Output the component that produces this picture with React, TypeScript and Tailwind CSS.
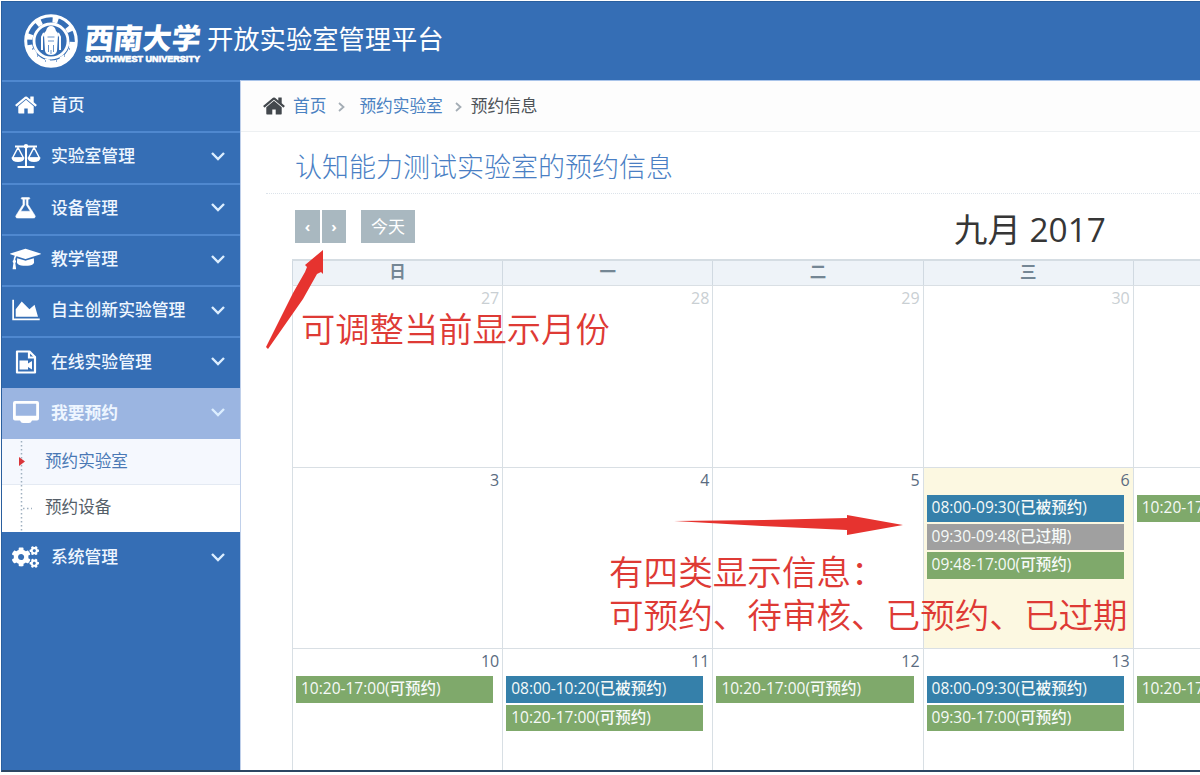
import type { ReactNode } from "react";
import { FaCogs } from "react-icons/fa";

const CN = "font-['Open_Sans','Noto_Sans_CJK_SC',sans-serif]";

function HomeIcon({ className }: { className: string }) {
  return (
    <svg viewBox="0 0 1792 1792" className={className} fill="currentColor">
      <path d="M1472 992v480q0 26-19 45t-45 19h-384v-384h-256v384h-384q-26 0-45-19t-19-45v-480q0-1 .5-3t.5-3l575-474 575 474q1 2 1 6zm223-69l-62 74q-8 9-21 11h-3q-13 0-21-7l-692-577-692 577q-12 8-24 7-13-2-21-11l-62-74q-8-10-7-23.5t11-21.5l719-599q32-26 76-26t76 26l244 204v-195q0-14 9-23t23-9h192q14 0 23 9t9 23v408l219 182q10 8 11 21.5t-7 23.5z" />
    </svg>
  );
}

function ScaleIcon() {
  return (
    <svg viewBox="0 0 30 26" className="h-[26px] w-[30px]" fill="none" stroke="currentColor">
      <path d="M4 3.500h22M15 3v20M6.500 24h17" strokeWidth="2" />
      <circle cx="15" cy="3.200" r="2.200" fill="currentColor" stroke="none" />
      <path d="M7 4.500L1.500 15h11zM23 4.500L17.500 15h11z" strokeWidth="1.500" strokeLinejoin="round" />
      <path d="M.5 14.500h13q-.5 4.500-6.500 4.500t-6.500-4.500zM16.500 14.500h13q-.5 4.500-6.500 4.500t-6.500-4.500z" fill="currentColor" stroke="none" />
    </svg>
  );
}

function FlaskIcon() {
  return (
    <svg viewBox="0 0 1792 1792" className="h-6 w-[25px]" fill="currentColor" stroke="currentColor" strokeWidth="40">
      <path d="M1527 1372q56 89 21.5 152.5t-140.5 63.5h-1152q-106 0-140.5-63.5t21.5-152.5l503-793v-399h-64q-26 0-45-19t-19-45 19-45 45-19h512q26 0 45 19t19 45-19 45-45 19h-64v399zm-779-725l-272 429h712l-272-429-20-31v-436h-128v436z" transform="translate(64 60)" />
    </svg>
  );
}

function CapIcon() {
  return (
    <svg viewBox="0 0 2304 1792" className="h-6 w-[31px] shrink-0" fill="currentColor">
      <path d="M1774 836l18 316q4 69-82 128t-235 93.5-323 34.5-323-34.5-235-93.5-82-128l18-316 574 181q22 7 48 7t48-7zm530-324q0 23-22 31l-1120 352q-4 1-10 1t-10-1l-652-206q-43 34-71 111.5t-34 178.5q63 36 63 109 0 69-58 107l58 433q2 14-8 25-9 11-24 11h-192q-15 0-24-11-10-11-8-25l58-433q-58-38-58-107 0-73 65-111 11-207 98-330l-333-104q-22-8-22-31t22-31l1120-352q4-1 10-1t10 1l1120 352q22 8 22 31z" />
    </svg>
  );
}

function AreaIcon() {
  return (
    <svg viewBox="0 0 2048 1792" className="h-6 w-[28px] shrink-0" fill="currentColor">
      <path d="M2048 1536v128h-2048v-1536h128v1408h1920zm-384-1024l256 896h-1664v-576l448-576 576 576z" />
    </svg>
  );
}

function VideoIcon() {
  return (
    <svg viewBox="0 0 22 24" className="h-6 w-[22px]" fill="none" stroke="currentColor" strokeWidth="2.2">
      <path d="M2 1.500h12.500l5.500 5.500v15.500h-18z" strokeLinejoin="round" />
      <path d="M14 1.500v6h6" />
      <path d="M4.500 10.500h8.500v3l4-2.500v8.500l-4-2.500v2.500h-8.500z" fill="currentColor" stroke="none" />
    </svg>
  );
}

function ScreenIcon() {
  return (
    <svg viewBox="0 0 26 23" className="h-[23px] w-[26px]" fill="currentColor">
      <path fillRule="evenodd" d="M2 0h22q2 0 2 2v15.500q0 2-2 2h-5q-1 2.500-3 2.500h-6q-2 0-3-2.500h-5q-2 0-2-2v-15.500q0-2 2-2zM2.800 2.800v12h20.400v-12z" />
    </svg>
  );
}

function Chevron() {
  return (
    <svg viewBox="0 0 14 9" className="mr-[15px] h-[9px] w-[14px]" fill="none" stroke="#dceeff" strokeWidth="2.4">
      <path d="M1 1l6 6 6-6" />
    </svg>
  );
}

function Crumb({ className }: { className: string }) {
  return (
    <svg viewBox="0 0 7 10" className={`mt-[3px] h-[10px] w-[7px] ${className}`} fill="none" stroke="#a4adb5" strokeWidth="1.8">
      <path d="M1 1l4.500 4-4.500 4" />
    </svg>
  );
}

function Crest() {
  return (
    <svg viewBox="0 0 54 54" className="size-[54px] shrink-0" fill="none" stroke="#fff">
      <circle cx="27" cy="27" r="25.300" strokeWidth="3" />
      <path d="M5 31a22.300 22.300 0 0 0 44 0" strokeWidth="6.500" />
      <circle cx="27" cy="27" r="21.500" strokeWidth="6" strokeDasharray="5.500 11.390" strokeDashoffset="-1" />
      <circle cx="27" cy="27" r="17" strokeWidth="2.800" />
      <path d="M18 36v-13l2-4M36 36v-13l-2-4" strokeWidth="2" />
      <path d="M20 21q0-3 2-4 1-5 5-5t5 5q2 1 2 4l-1 16q-1 4-6 4t-6-4z" fill="#fff" stroke="none" />
      <path d="M23.500 23h7M24 27h6M24.500 31v7M27 36v4M29.500 31v7" stroke="#6793cb" strokeWidth="1" />
      <path d="M8 35h1M13 42h1M21 47h1M32 47h1M40 42h1M45 35h1" stroke="#6793cb" strokeWidth="1.500" />
    </svg>
  );
}

function MenuRow({ icon, label, arrow = true, active = false, last = false }: { icon: ReactNode; label: string; arrow?: boolean; active?: boolean; last?: boolean }) {
  return (
    <li className={`flex h-[51.300px] list-none items-center border-t-2 pb-[3px] ${active ? "border-[#9bb5e1] bg-[#9bb5e1]" : last ? "border-[#356eb5] bg-[#356eb5]" : "border-[#4f88cf] bg-[#356eb5]"}`}>
      <span className="flex w-[49px] shrink-0 items-center justify-center pr-[2px] text-white">{icon}</span>
      <span className={`flex-1 whitespace-nowrap text-[16.800px] leading-6 text-[#eef6ff] ${active ? "font-bold" : "font-medium"}`}>{label}</span>
      {arrow && <Chevron />}
    </li>
  );
}

type Event = { text: string; kind: "booked" | "expired" | "open" };
type Day = { n: string; muted?: boolean; today?: boolean; events?: Event[] };

const TONES = { booked: "bg-[#3580aa]", expired: "bg-[#a0a0a0]", open: "bg-[#7fa96b]" };

const WEEKS: { height: string; days: Day[] }[] = [
  {
    height: "h-[182px]",
    days: [{ n: "27", muted: true }, { n: "28", muted: true }, { n: "29", muted: true }, { n: "30", muted: true }, { n: "" }],
  },
  {
    height: "h-[181px]",
    days: [
      { n: "3" },
      { n: "4" },
      { n: "5" },
      {
        n: "6",
        today: true,
        events: [
          { text: "08:00-09:30(已被预约)", kind: "booked" },
          { text: "09:30-09:48(已过期)", kind: "expired" },
          { text: "09:48-17:00(可预约)", kind: "open" },
        ],
      },
      { n: "", events: [{ text: "10:20-17:00(可预约)", kind: "open" }] },
    ],
  },
  {
    height: "h-[122px]",
    days: [
      { n: "10", events: [{ text: "10:20-17:00(可预约)", kind: "open" }] },
      { n: "11", events: [{ text: "08:00-10:20(已被预约)", kind: "booked" }, { text: "10:20-17:00(可预约)", kind: "open" }] },
      { n: "12", events: [{ text: "10:20-17:00(可预约)", kind: "open" }] },
      { n: "13", events: [{ text: "08:00-09:30(已被预约)", kind: "booked" }, { text: "09:30-17:00(可预约)", kind: "open" }] },
      { n: "", events: [{ text: "10:20-17:00(可预约)", kind: "open" }] },
    ],
  },
];

function DayCell({ day }: { day: Day }) {
  return (
    <div className={`w-[210.200px] shrink-0 border-l border-[#d8dfe4] ${day.today ? "bg-[#fcf8e1]" : ""}`}>
      <div className={`h-[27px] pr-[3px] text-right text-[16px] leading-[25px] ${day.muted ? "text-[#c9cfd3]" : "text-[#5a6b80]"}`}>{day.n}</div>
      <div className="flex flex-col gap-[2px] pl-[3px] pr-[9px]">
        {day.events?.map((e) => (
          <div key={e.text} className={`h-[26.500px] overflow-hidden whitespace-nowrap pl-[5px] text-[15.500px] font-medium leading-[24px] text-[#f6faf8] ${TONES[e.kind]}`}>
            {e.text}
          </div>
        ))}
      </div>
    </div>
  );
}

export default function App() {
  return (
    <div className={`relative h-[775px] w-[1200px] overflow-hidden bg-white pl-[1px] pt-[1px] ${CN}`}>
      <div className="flex h-[771px] flex-col border-b-2 border-l border-t border-b-[#2c4663] border-l-[#2a5f9e] border-t-[#2a5f9e]">
        <header className="flex h-[78px] shrink-0 items-center bg-[#356eb5] pb-px pl-[22px] text-white">
          <Crest />
          <div className="ml-[7px] mt-[3px] flex w-[118px] shrink-0 flex-col">
            <span className="-skew-x-6 whitespace-nowrap font-['Noto_Sans_CJK_SC',sans-serif] text-[29px] font-black leading-[31px]">西南大学</span>
            <svg viewBox="0 0 118 12" className="h-[12px] w-[118px]">
              <text x="0" y="9.500" textLength="115" lengthAdjust="spacingAndGlyphs" fill="#fff" stroke="#fff" strokeWidth=".7" fontFamily="Liberation Sans" fontWeight="bold" fontSize="9.500">SOUTHWEST UNIVERSITY</text>
            </svg>
          </div>
          <h1 className="mb-[3px] ml-[4px] whitespace-nowrap text-[26.300px] leading-[36px]">开放实验室管理平台</h1>
        </header>

        <div className="flex min-h-0 flex-1">
          <aside className="w-[238px] shrink-0 bg-[#356eb5]">
            <ul>
              <MenuRow arrow={false} icon={<HomeIcon className="size-6" />} label="首页" />
              <MenuRow icon={<ScaleIcon />} label="实验室管理" />
              <MenuRow icon={<FlaskIcon />} label="设备管理" />
              <MenuRow icon={<CapIcon />} label="教学管理" />
              <MenuRow icon={<AreaIcon />} label="自主创新实验管理" />
              <MenuRow icon={<VideoIcon />} label="在线实验管理" />
              <MenuRow active icon={<ScreenIcon />} label="我要预约" />
            </ul>
            <div className="relative h-[93px] bg-white text-[16.600px]">
              <div className="flex h-[46px] items-center border-b border-[#e4eaf3] bg-[#f5f8fe] pl-[43px] text-[#4a78b5]">预约实验室</div>
              <div className="flex h-[47px] items-center pb-[2px] pl-[43px] text-[#555e68]">预约设备</div>
              <svg viewBox="0 0 14 93" className="absolute left-[17px] top-0 h-[93px] w-[14px]">
                <path d="M2.500 2v91M4 69.500h9" stroke="#9fb0bf" strokeWidth="1.500" strokeDasharray="1.500 2.500" fill="none" />
                <path d="M0 18l6 4.500-6 4.500z" fill="#d9363a" />
              </svg>
            </div>
            <ul>
              <MenuRow last icon={<FaCogs className="h-[24px] w-[27px]" />} label="系统管理" />
            </ul>
          </aside>

          <main className="min-w-0 flex-1 border-l border-t border-l-[#c0d0ea] border-t-[#a9c4ea]">
            <nav className="flex h-[51px] items-center border-b border-[#edf0f2] bg-[#fdfdfd] pb-px pl-[21px] text-[16.700px] text-[#4b82c2]">
              <HomeIcon className="size-6 text-[#43484d]" />
              <span className="ml-[7px]">首页</span>
              <Crumb className="ml-[12px] mr-[14px]" />
              <span>预约实验室</span>
              <Crumb className="ml-[12px] mr-[9px]" />
              <span className="text-[#4d5358]">预约信息</span>
            </nav>
            <h2 className="ml-[25px] h-[62px] border-b border-dotted border-[#dce3ea] pl-[29px] pt-[13px] font-['Noto_Sans_CJK_SC',sans-serif] text-[27px] font-light leading-[42px] text-[#4a7fc4]">认知能力测试实验室的预约信息</h2>
            <div className="flex h-[65px] pl-[54px] pt-[16px] text-white">
              <span className="flex h-[33px] w-[25px] items-center justify-center bg-[#a9b8c0] text-[15px] font-bold">‹</span>
              <span className="ml-[2px] flex h-[33px] w-[24px] items-center justify-center bg-[#a9b8c0] text-[15px] font-bold">›</span>
              <span className="ml-[15px] flex h-[33px] w-[54px] items-center justify-center bg-[#a9b8c0] text-[17px]">今天</span>
              <span className="-mt-[5px] ml-[539px] whitespace-nowrap text-[33.400px] leading-[48px] text-[#363636]">九月 2017</span>
            </div>

            <section className="ml-[51px] w-[1060px] border-t-2 border-[#d5dde3]">
              <div className="flex h-[24px] bg-[#eef3f8]">
                {["日", "一", "二", "三", ""].map((d, i) => (
                  <div key={i} className="w-[210.200px] shrink-0 border-l border-[#d0d9e1] text-center text-[16.500px] font-bold leading-[22px] text-[#748694]">{d}</div>
                ))}
              </div>
              {WEEKS.map((w, i) => (
                <div key={i} className={`flex border-t border-[#d9dfe4] ${w.height}`}>
                  {w.days.map((d, j) => (
                    <DayCell key={j} day={d} />
                  ))}
                </div>
              ))}
            </section>
          </main>
        </div>
      </div>

      <svg viewBox="0 0 1200 775" className="pointer-events-none absolute inset-0 h-[775px] w-[1200px]" fill="#e6332f">
        <path d="M323 250l-18 15 2 2-2 5-12 21-27 54 2 2 35-50 14-25 4-2 2 2z" />
        <path d="M674 521l90-1 83-2v-3l56 10-56 10v-5l-85-4z" />
      </svg>
      <p className="absolute left-[301px] top-[304px] whitespace-nowrap font-['Noto_Sans_CJK_SC',sans-serif] text-[34.300px] font-[350] leading-[46px] text-[#de3a35]">可调整当前显示月份</p>
      <p className="absolute left-[609px] top-[549px] whitespace-nowrap font-['Noto_Sans_CJK_SC',sans-serif] text-[34.600px] font-[350] leading-[42.500px] text-[#de3a35]">
        有四类显示信息：
        <br />
        可预约、待审核、已预约、已过期
      </p>
    </div>
  );
}
